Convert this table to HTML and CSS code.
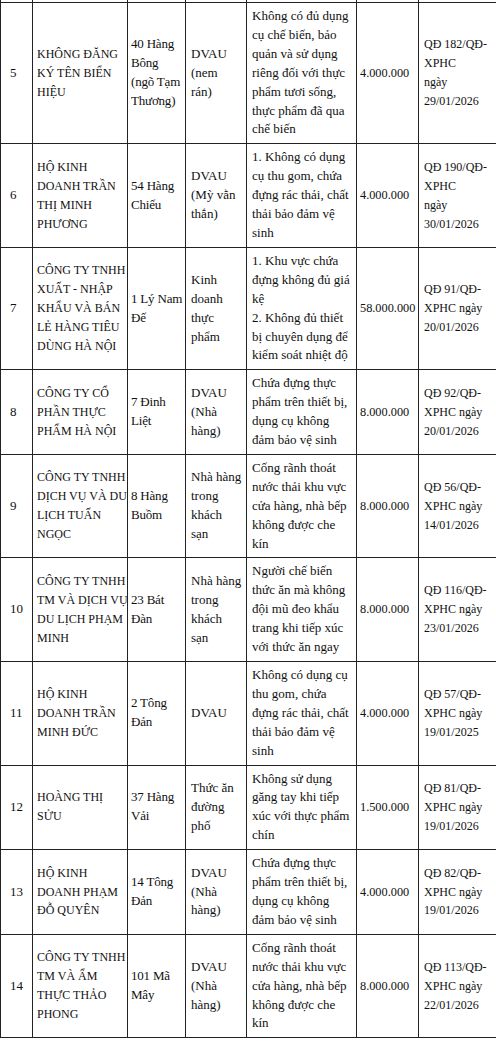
FILE: index.html
```html
<!DOCTYPE html>
<html lang="vi">
<head>
<meta charset="utf-8">
<title>Danh sách xử phạt</title>
<link rel="stylesheet" href="styles.css">
</head>
<body>
<table class="grid">
  <colgroup>
    <col class="c-no"><col class="c-name"><col class="c-addr"><col class="c-type"><col class="c-viol"><col class="c-fine"><col class="c-dec">
  </colgroup>
  <tbody>
    <tr class="stub"><td></td><td></td><td></td><td></td><td></td><td></td><td></td></tr>
    <tr>
      <td class="no">5</td>
      <td class="name">KHÔNG ĐĂNG<br>KÝ TÊN BIỂN<br>HIỆU</td>
      <td class="addr">40 Hàng<br>Bông<br>(ngõ Tạm<br>Thương)</td>
      <td>DVAU<br>(nem<br>rán)</td>
      <td>Không có đủ dụng<br>cụ chế biến, bảo<br>quản và sử dụng<br>riêng đối với thực<br>phẩm tươi sống,<br>thực phẩm đã qua<br>chế biến</td>
      <td class="fine">4.000.000</td>
      <td class="dec">QĐ 182/QĐ-<br>XPHC<br>ngày<br>29/01/2026</td>
    </tr>
    <tr>
      <td class="no">6</td>
      <td class="name">HỘ KINH<br>DOANH TRẦN<br>THỊ MINH<br>PHƯƠNG</td>
      <td class="addr">54 Hàng<br>Chiếu</td>
      <td>DVAU<br>(Mỳ vằn<br>thắn)</td>
      <td>1. Không có dụng<br>cụ thu gom, chứa<br>đựng rác thải, chất<br>thải bảo đảm vệ<br>sinh</td>
      <td class="fine">4.000.000</td>
      <td class="dec">QĐ 190/QĐ-<br>XPHC<br>ngày<br>30/01/2026</td>
    </tr>
    <tr>
      <td class="no">7</td>
      <td class="name">CÔNG TY TNHH<br>XUẤT - NHẬP<br>KHẨU VÀ BÁN<br>LẺ HÀNG TIÊU<br>DÙNG HÀ NỘI</td>
      <td class="addr">1 Lý Nam<br>Đế</td>
      <td>Kinh<br>doanh<br>thực<br>phẩm</td>
      <td>1. Khu vực chứa<br>đựng không đủ giá<br>kệ<br>2. Không đủ thiết<br>bị chuyên dụng để<br>kiểm soát nhiệt độ</td>
      <td class="fine">58.000.000</td>
      <td class="dec">QĐ 91/QĐ-<br>XPHC ngày<br>20/01/2026</td>
    </tr>
    <tr>
      <td class="no">8</td>
      <td class="name">CÔNG TY CỔ<br>PHẦN THỰC<br>PHẨM HÀ NỘI</td>
      <td class="addr">7 Đinh<br>Liệt</td>
      <td>DVAU<br>(Nhà<br>hàng)</td>
      <td>Chứa đựng thực<br>phẩm trên thiết bị,<br>dụng cụ không<br>đảm bảo vệ sinh</td>
      <td class="fine">8.000.000</td>
      <td class="dec">QĐ 92/QĐ-<br>XPHC ngày<br>20/01/2026</td>
    </tr>
    <tr>
      <td class="no">9</td>
      <td class="name">CÔNG TY TNHH<br>DỊCH VỤ VÀ DU<br>LỊCH TUẤN<br>NGỌC</td>
      <td class="addr">8 Hàng<br>Buồm</td>
      <td>Nhà hàng<br>trong<br>khách<br>sạn</td>
      <td>Cống rãnh thoát<br>nước thải khu vực<br>cửa hàng, nhà bếp<br>không được che<br>kín</td>
      <td class="fine">8.000.000</td>
      <td class="dec">QĐ 56/QĐ-<br>XPHC ngày<br>14/01/2026</td>
    </tr>
    <tr>
      <td class="no">10</td>
      <td class="name">CÔNG TY TNHH<br>TM VÀ DỊCH VỤ<br>DU LỊCH PHẠM<br>MINH</td>
      <td class="addr">23 Bát<br>Đàn</td>
      <td>Nhà hàng<br>trong<br>khách<br>sạn</td>
      <td>Người chế biến<br>thức ăn mà không<br>đội mũ đeo khẩu<br>trang khi tiếp xúc<br>với thức ăn ngay</td>
      <td class="fine">8.000.000</td>
      <td class="dec">QĐ 116/QĐ-<br>XPHC ngày<br>23/01/2026</td>
    </tr>
    <tr>
      <td class="no">11</td>
      <td class="name">HỘ KINH<br>DOANH TRẦN<br>MINH ĐỨC</td>
      <td class="addr">2 Tông<br>Đản</td>
      <td>DVAU</td>
      <td>Không có dụng cụ<br>thu gom, chứa<br>đựng rác thải, chất<br>thải bảo đảm vệ<br>sinh</td>
      <td class="fine">4.000.000</td>
      <td class="dec">QĐ 57/QĐ-<br>XPHC ngày<br>19/01/2025</td>
    </tr>
    <tr>
      <td class="no">12</td>
      <td class="name">HOÀNG THỊ<br>SỬU</td>
      <td class="addr">37 Hàng<br>Vải</td>
      <td>Thức ăn<br>đường<br>phố</td>
      <td>Không sử dụng<br>găng tay khi tiếp<br>xúc với thực phẩm<br>chín</td>
      <td class="fine">1.500.000</td>
      <td class="dec">QĐ 81/QĐ-<br>XPHC ngày<br>19/01/2026</td>
    </tr>
    <tr>
      <td class="no">13</td>
      <td class="name">HỘ KINH<br>DOANH PHẠM<br>ĐỖ QUYÊN</td>
      <td class="addr">14 Tông<br>Đản</td>
      <td>DVAU<br>(Nhà<br>hàng)</td>
      <td>Chứa đựng thực<br>phẩm trên thiết bị,<br>dụng cụ không<br>đảm bảo vệ sinh</td>
      <td class="fine">4.000.000</td>
      <td class="dec">QĐ 82/QĐ-<br>XPHC ngày<br>19/01/2026</td>
    </tr>
    <tr>
      <td class="no">14</td>
      <td class="name">CÔNG TY TNHH<br>TM VÀ ẨM<br>THỰC THẢO<br>PHONG</td>
      <td class="addr">101 Mã<br>Mây</td>
      <td>DVAU<br>(Nhà<br>hàng)</td>
      <td>Cống rãnh thoát<br>nước thải khu vực<br>cửa hàng, nhà bếp<br>không được che<br>kín</td>
      <td class="fine">8.000.000</td>
      <td class="dec">QĐ 113/QĐ-<br>XPHC ngày<br>22/01/2026</td>
    </tr>
  </tbody>
</table>
</body>
</html>
```

FILE: styles.css
```css
html, body {
  margin: 0;
  padding: 0;
  background: #fff;
}

.grid {
  width: 496px;
  table-layout: fixed;
  border-collapse: collapse;
  font-family: "Liberation Serif", "DejaVu Serif", serif;
  font-size: 13px;
  line-height: 18.9px;
  color: #111;
}

.c-no { width: 32px; }
.c-name { width: 95px; }
.c-addr { width: 58px; }
.c-type { width: 61px; }
.c-viol { width: 110px; }
.c-fine { width: 62px; }
.c-dec { width: 78px; }

.grid td {
  border: 1px solid #222;
  padding: 4px 2px 4px 5px;
  vertical-align: middle;
  text-align: left;
  white-space: nowrap;
  overflow: hidden;
}

.grid td.no {
  padding-left: 9px;
}

.grid td.name {
  font-size: 12px;
  padding-left: 4px;
}

.grid td.addr {
  padding-left: 3px;
  letter-spacing: -0.2px;
}

.grid td.fine {
  font-size: 12.3px;
  padding-left: 3px;
  padding-right: 0;
}

.grid td.dec {
  font-size: 12px;
}

.grid .stub td {
  height: 2px;
  padding: 0;
  border-top: 0;
}
```
